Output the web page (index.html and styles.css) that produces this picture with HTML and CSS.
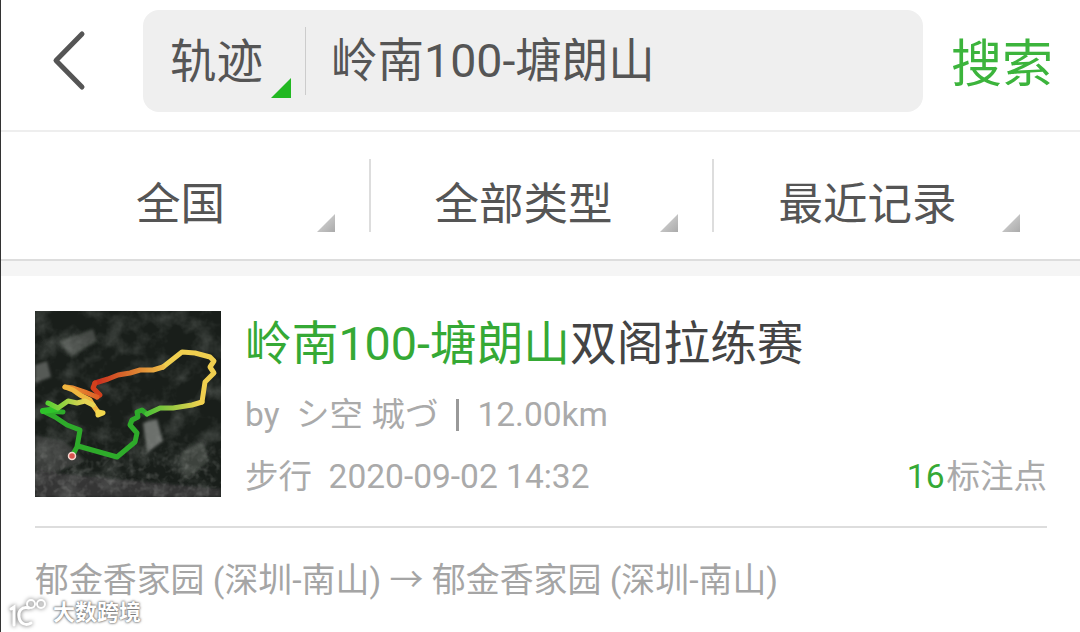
FILE: index.html
```html
<!DOCTYPE html>
<html>
<head>
    <title>轨迹搜索</title>
    <link rel="stylesheet" href="styles.css">
</head>
<body>
    <div class="page">
        <header class="topbar">
            <div class="back">
                <svg width="36" height="62" viewBox="0 0 36 62">
                    <path d="M31 4 L5 30.500 L31 57" fill="none" stroke="#555" stroke-width="5" stroke-linecap="round" stroke-linejoin="round"/>
                </svg>
            </div>
            <div class="searchbox">
                <div class="search-type">轨迹<span class="corner corner-green"></span></div>
                <div class="search-query">岭南100-塘朗山</div>
            </div>
            <div class="search-btn">搜索</div>
        </header>

        <nav class="filters">
            <div class="filter">全国<span class="corner corner-gray"></span></div>
            <div class="filter">全部类型<span class="corner corner-gray"></span></div>
            <div class="filter filter-last">最近记录<span class="corner corner-gray"></span></div>
        </nav>
        <div class="band"></div>

        <section class="card">
            <div class="card-main">
                <svg class="thumb" width="186" height="186" viewBox="0 0 186 186">
                    <defs>
                        <filter id="mottle" x="0" y="0" width="100%" height="100%">
                            <feTurbulence type="fractalNoise" baseFrequency="0.045" numOctaves="4" seed="11"/>
                            <feColorMatrix values="0 0 0 0 0.62  0 0 0 0 0.66  0 0 0 0 0.62  1.800 0 0 0 -0.800"/>
                        </filter>
                        <filter id="grain" x="0" y="0" width="100%" height="100%">
                            <feTurbulence type="fractalNoise" baseFrequency="0.16" numOctaves="2" seed="4"/>
                            <feColorMatrix values="0 0 0 0 0.60  0 0 0 0 0.60  0 0 0 0 0.58  2 0 0 0 -0.950"/>
                        </filter>
                        <filter id="soft"><feGaussianBlur stdDeviation="1.600"/></filter>
                        <filter id="line"><feGaussianBlur stdDeviation="0.400"/></filter>
                        <linearGradient id="fade" x1="0" y1="0" x2="0" y2="1">
                            <stop offset="0.600" stop-color="#000"/>
                            <stop offset="0.850" stop-color="#aaa"/>
                        </linearGradient>
                        <mask id="lower"><rect width="186" height="186" fill="url(#fade)"/></mask>
                        <linearGradient id="grad-east" gradientUnits="userSpaceOnUse" x1="105" y1="0" x2="165" y2="0">
                            <stop offset="0" stop-color="#36bd33"/>
                            <stop offset="1" stop-color="#f0d24f"/>
                        </linearGradient>
                        <linearGradient id="grad-ridge" gradientUnits="userSpaceOnUse" x1="60" y1="0" x2="135" y2="0">
                            <stop offset="0" stop-color="#c92a1d"/>
                            <stop offset="0.500" stop-color="#dc7a30"/>
                            <stop offset="1" stop-color="#f2ca4c"/>
                        </linearGradient>
                        <linearGradient id="grad-spur" gradientUnits="userSpaceOnUse" x1="30" y1="0" x2="66" y2="0">
                            <stop offset="0" stop-color="#e89a34"/>
                            <stop offset="1" stop-color="#de5a26"/>
                        </linearGradient>
                        <linearGradient id="grad-west" gradientUnits="userSpaceOnUse" x1="10" y1="0" x2="50" y2="0">
                            <stop offset="0" stop-color="#4fcf30"/>
                            <stop offset="1" stop-color="#e6d455"/>
                        </linearGradient>
                    </defs>
                    <rect width="186" height="186" fill="#191e1a"/>
                    <g filter="url(#soft)">
                        <path d="M24 30 L58 18 L62 30 L36 46 Z" fill="#444944"/>
                        <path d="M0 54 L12 50 L16 66 L0 72 Z" fill="#565a56"/>
                        <path d="M108 112 L122 108 L128 130 L112 142 Z" fill="#6c6f6c"/>
                        <path d="M145 142 L168 130 L174 150 L150 170 Z" fill="#3e423e"/>
                        <path d="M0 124 L30 130 L50 150 L0 170 Z" fill="#3a3c3a"/>
                        <path d="M0 160 L186 178 L186 186 L0 186 Z" fill="#343634"/>
                    </g>
                    <rect width="186" height="186" filter="url(#mottle)" opacity="0.280"/>
                    <rect width="186" height="186" filter="url(#grain)" opacity="0.400" mask="url(#lower)"/>
                    <g fill="none" stroke-width="5" stroke-linecap="round" stroke-linejoin="round" filter="url(#line)">
                        <path d="M37 145 L42 136 L45 119 L32 114 L20 106 L8 100 L28 101" stroke="#2faa2c"/>
                        <path d="M8 100 L22 98" stroke="#2fc42c" stroke-width="6"/>
                        <path d="M43 135 L82 146 L100 131 L102 122 L95 114 L97 109 L103 106 L102 101 L107 99 L112 103" stroke="#2fab2c"/>
                        <path d="M112 103 L125 97 L138 97 L157 94 L167 91" stroke="url(#grad-east)"/>
                        <path d="M167 91 L170 71 L179 62 L175 56 L179 50 L175 46 L160 42 L147 41 L128 56" stroke="#f0cf50"/>
                        <path d="M128 56 L118 59 L105 59 L95 62 L83 64 L73 68 L60 72" stroke="url(#grad-ridge)"/>
                        <path d="M60 72 L58 77 L65 84 L62 86" stroke="#d2401f"/>
                        <path d="M62 86 L50 81 L38 77 L30 76" stroke="url(#grad-spur)"/>
                        <path d="M30 76 L38 79 L45 84 L55 89 L58 94 L63 101" stroke="#efb63f"/>
                        <path d="M63 101 L68 102 L63 104 L63 101" stroke="#f2d74e"/>
                        <path d="M58 94 L50 90 L42 92 L33 90 L23 97 L13 92" stroke="url(#grad-west)"/>
                    </g>
                    <circle cx="37" cy="145" r="3.500" fill="#d9534f" stroke="#f7d8d0" stroke-width="1.500"/>
                </svg>
                <div class="info">
                    <div class="title"><span class="hit">岭南100-塘朗山</span>双阁拉练赛</div>
                    <div class="meta meta-author">by &nbsp;シ空 城づ<span class="sep"></span>12.00km</div>
                    <div class="meta meta-row">
                        <span>步行 &nbsp;2020-09-02 14:32</span>
                        <span><span class="count">16</span>标注点</span>
                    </div>
                </div>
            </div>
            <div class="route">郁金香家园 (深圳-南山) → 郁金香家园 (深圳-南山)</div>
        </section>

        <div class="watermark">
            <svg width="40" height="30" viewBox="0 0 40 30">
                <g fill="none" stroke="#fff" stroke-linecap="round">
                    <path d="M2 11 L5 9 L5 27" stroke-width="3"/>
                    <path d="M20 10 C12 8 9 14 10 19 C11 26 17 28 22 25" stroke-width="3"/>
                    <circle cx="22" cy="6" r="4" stroke-width="2"/>
                    <circle cx="32" cy="6" r="4" stroke-width="2"/>
                </g>
            </svg>
            <span>大数跨境</span>
        </div>
    </div>
</body>
</html>
```

FILE: styles.css
```css
* {
    box-sizing: border-box;
}
body {
    margin: 0;
    background: #fff;
    font-family: Roboto, "Noto Sans CJK SC", sans-serif;
    color: #555;
}
.page {
    position: relative;
    width: 1080px;
    height: 632px;
    overflow: hidden;
    border-left: 1px solid #333;
}

/* top search bar */
.topbar {
    display: flex;
    height: 132px;
    padding-top: 10px;
    border-bottom: 2px solid #eee;
}
.back {
    width: 142px;
    padding: 20px 0 0 50px;
}
.searchbox {
    display: flex;
    align-items: center;
    width: 780px;
    height: 102px;
    background: #efefef;
    border-radius: 16px;
}
.search-type {
    position: relative;
    width: 163px;
    height: 68px;
    padding-left: 27px;
    border-right: 1px solid #ccc;
    font-size: 46.500px;
    line-height: 71px;
}
.search-query {
    padding-left: 25px;
    font-size: 46.500px;
    line-height: 74px;
}
.search-btn {
    margin-left: 28px;
    font-size: 51px;
    line-height: 110px;
    color: #3cb43c;
}
.corner {
    position: absolute;
    bottom: 0;
    clip-path: polygon(100% 0, 100% 100%, 0 100%);
}
.corner-green {
    right: 14px;
    bottom: -3px;
    width: 20px;
    height: 20px;
    background: #22b822;
}
.corner-gray {
    right: 34px;
    width: 18px;
    height: 18px;
    background: linear-gradient(135deg, #ddd, #aaa);
}
.filter-last .corner-gray {
    right: 37px;
}

/* filters */
.filters {
    display: flex;
    height: 129px;
    padding: 27px 0 0 27px;
    border-bottom: 2px solid #ddd;
}
.filter {
    position: relative;
    display: flex;
    justify-content: center;
    width: 343px;
    height: 73px;
    padding-right: 36px;
    border-right: 2px solid #ddd;
    font-size: 44.500px;
    line-height: 93px;
}
.filter-last {
    border-right: 0;
}
.band {
    height: 15px;
    background: #f5f5f5;
}

/* result card */
.card {
    padding: 35px 33px 0 34px;
}
.card-main {
    display: flex;
    padding-bottom: 29px;
    border-bottom: 2px solid #ddd;
}
.thumb {
    flex: none;
    display: block;
}
.info {
    flex: 1;
    padding-left: 24px;
}
.title {
    font-size: 46.700px;
    line-height: 66px;
    color: #444;
}
.hit {
    color: #35a935;
}
.meta {
    font-size: 33.500px;
    color: #aaa;
}
.meta-author {
    display: flex;
    align-items: center;
    white-space: pre;
    line-height: 40px;
    margin-top: 18px;
}
.sep {
    width: 3px;
    height: 32px;
    margin: 0 18px;
    background: #999;
}
.meta-row {
    display: flex;
    justify-content: space-between;
    line-height: 40px;
    margin-top: 22px;
}
.count {
    margin-right: 2px;
    color: #35a935;
}
.route {
    margin-top: 32px;
    font-size: 33.900px;
    line-height: 42px;
    color: #a5a5a5;
}

/* image watermark */
.watermark {
    position: absolute;
    left: 8px;
    top: 598px;
    display: flex;
    align-items: center;
    gap: 4px;
    font-size: 22px;
    font-weight: 700;
    line-height: 28px;
    color: #fff;
    text-shadow: 0 0 3px #666, 0 0 2px #666;
}
.watermark svg {
    filter: drop-shadow(0 0 2px #666);
}
```
